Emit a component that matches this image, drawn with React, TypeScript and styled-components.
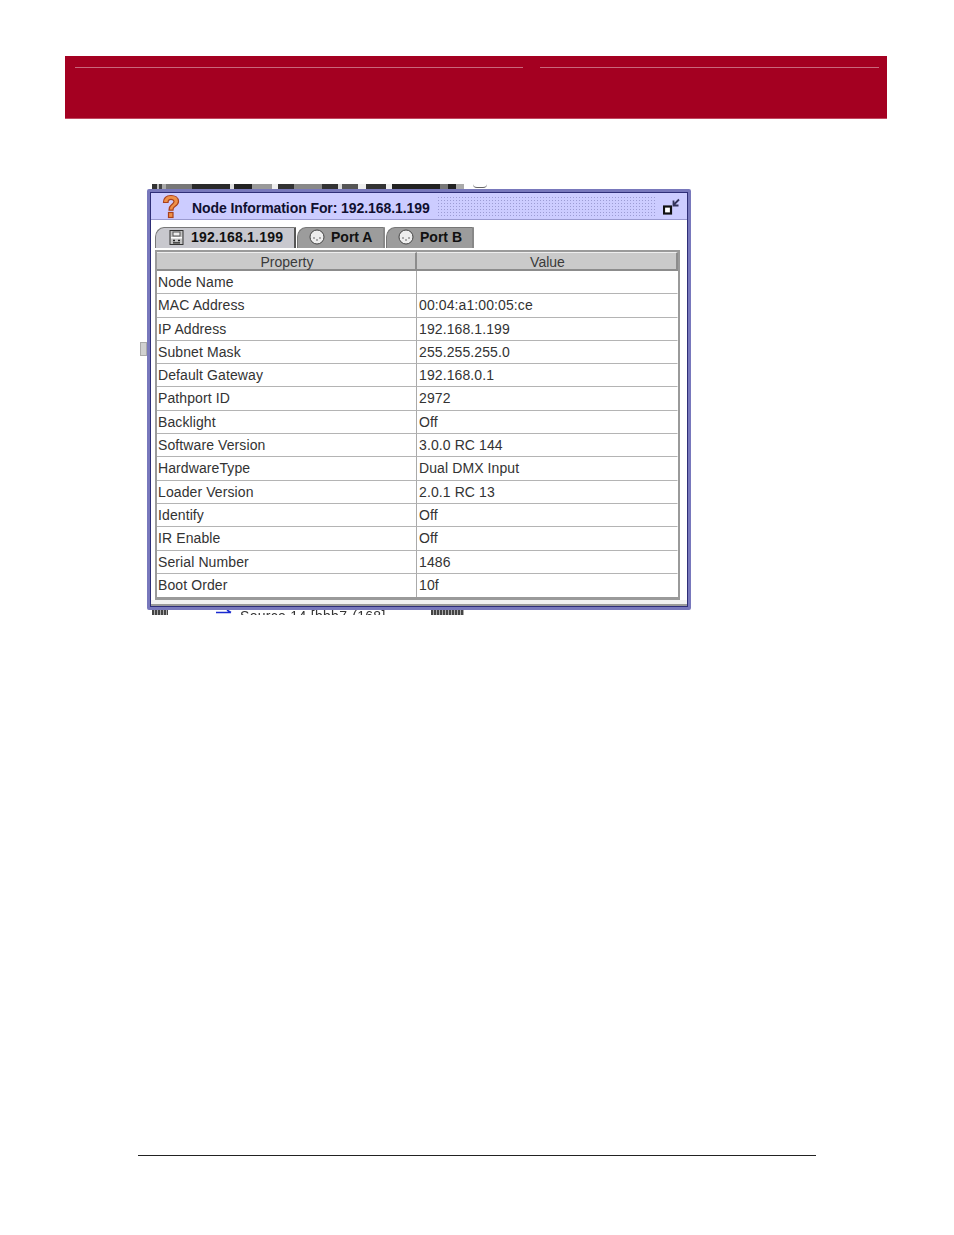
import React from 'react';
import styled, { createGlobalStyle } from 'styled-components';

const GlobalStyle = createGlobalStyle`
  html, body {
    margin: 0;
    padding: 0;
    background: #fff;
  }
`;

const Page = styled.div`
  width: 954px;
  height: 1235px;
  box-sizing: border-box;
  padding-top: 56px;
  display: flex;
  flex-direction: column;
  overflow: hidden;
  font-family: 'Liberation Sans', Arial, sans-serif;
`;

const Banner = styled.header`
  width: 822px;
  height: 63px;
  margin-left: 65px;
  box-sizing: border-box;
  padding: 11px 8px 0 10px;
  background: #a40021;
  border-bottom: 1px solid #c04a62;
  display: flex;
  justify-content: space-between;
  align-items: flex-start;
`;

const BannerLine = styled.div<{ $w: number }>`
  width: ${(p) => p.$w}px;
  height: 1px;
  background: #c9687c;
`;

const Shot = styled.div`
  width: 544px;
  margin: 65px 0 0 147px;
  position: relative;
  filter: blur(0.35px);
`;

const ScrapTop = styled.div`
  height: 5px;
  display: flex;
  padding-left: 5px;
`;

const ScrapStrip = styled.div`
  width: 312px;
  height: 5px;
  background: linear-gradient(
    90deg,
    #333 0 5px, #bbb 5px 7px, #444 7px 10px, #aaa 10px 14px, #777 14px 40px, #2a2a2a 40px 78px,
    #ddd 78px 82px, #222 82px 100px, #999 100px 120px, #eee 120px 126px, #333 126px 142px,
    #888 142px 170px, #333 170px 186px, #ddd 186px 190px, #555 190px 206px, #eee 206px 214px,
    #333 214px 234px, #eee 234px 240px, #222 240px 288px, #777 288px 296px, #222 296px 304px, #aaa 304px 312px
  );
`;

const ScrapMark = styled.div`
  width: 14px;
  height: 3px;
  margin-left: 9px;
  border-bottom: 1px solid #666;
  border-radius: 0 0 7px 7px;
`;

const Window = styled.div`
  height: 421px;
  box-sizing: border-box;
  background: #fff;
  border: 3px solid #7878bc;
  border-radius: 2px;
  box-shadow: inset 0 0 0 1px #2e2e78;
  padding: 1px;
  display: flex;
  flex-direction: column;
`;

const TitleBar = styled.div`
  height: 27px;
  flex: none;
  box-sizing: border-box;
  padding: 0 6px 0 10px;
  background: #ccccff;
  border-bottom: 1px solid #9a9ad0;
  display: flex;
  align-items: center;
  color: #101030;
  font-size: 14px;
  font-weight: bold;
`;

const TitleText = styled.span`
  margin-left: 11px;
  padding-top: 3px;
  letter-spacing: -0.08px;
  white-space: nowrap;
`;

const Dither = styled.div`
  flex: 1;
  height: 20px;
  margin: 0 7px;
  background-color: #ccccff;
  background-image: radial-gradient(#9c9cd4 0.8px, transparent 0.9px);
  background-size: 3px 3px;
`;

const TabRow = styled.div`
  height: 23px;
  flex: none;
  margin-top: 5px;
  padding-left: 4px;
  display: flex;
  align-items: flex-end;
`;

const Tab = styled.div<{ $active?: boolean; $w: number }>`
  width: ${(p) => p.$w}px;
  height: 21px;
  box-sizing: border-box;
  margin-right: 1px;
  padding: 0 0 2px ${(p) => (p.$active ? 13 : 11)}px;
  display: flex;
  align-items: center;
  gap: ${(p) => (p.$active ? 7 : 6)}px;
  background: ${(p) => (p.$active ? '#c8c8ce' : '#9c9c9c')};
  border-top: 1px solid #777;
  border-left: 1px solid #777;
  border-right: 2px solid ${(p) => (p.$active ? '#555' : '#888')};
  border-top-left-radius: 9px 10px;
  color: #111;
  font-size: 14px;
  font-weight: bold;
  letter-spacing: ${(p) => (p.$active ? 0.2 : 0)}px;
`;

const TableFrame = styled.div`
  flex: none;
  margin: 2px 7px 0 4px;
  border: 2px solid #9a9a9a;
  border-bottom-width: 3px;
  background: #fff;
`;

const PropsTable = styled.div`
  display: grid;
  grid-template-columns: 260px 1fr;
`;

const HeadCell = styled.div`
  height: 19px;
  box-sizing: border-box;
  padding-left: 2px;
  background: #cacaca;
  border-right: 2px solid #8c8c8c;
  border-bottom: 2px solid #8c8c8c;
  border-top: 1px solid #eee;
  color: #3a3a3a;
  font-size: 14px;
  line-height: 18px;
  text-align: center;
`;

const Cell = styled.div<{ $first?: boolean; $last?: boolean }>`
  height: 23.3px;
  box-sizing: border-box;
  padding-left: ${(p) => (p.$first ? 1 : 2)}px;
  border-right: 1px solid ${(p) => (p.$first ? '#aaa' : 'transparent')};
  border-bottom: ${(p) => (p.$last ? 0 : '1px solid #b4b4b4')};
  color: #333;
  font-size: 14px;
  line-height: 22px;
  letter-spacing: 0.1px;
  white-space: nowrap;
`;

const WindowFoot = styled.div`
  margin-top: auto;
  height: 4px;
  flex: none;
  background: #f2f2f2;
  border-bottom: 2px solid #9a9a9a;
`;

const ScrapBottom = styled.div`
  height: 5px;
  margin: 0 227px 0 5px;
  overflow: hidden;
  display: flex;
  align-items: flex-start;
  color: #333;
  font-size: 14px;
  line-height: 14px;
`;

const ScrapBar = styled.div<{ $w: number }>`
  width: ${(p) => p.$w}px;
  height: 5px;
  flex: none;
  background: repeating-linear-gradient(90deg, #444 0 2px, #aaa 2px 3px);
`;

const ScrapArrow = styled.svg`
  flex: none;
  margin-left: 48px;
`;

const ScrapLabel = styled.span`
  flex: 1;
  margin-left: 8px;
  margin-top: -1px;
  color: #333;
  letter-spacing: 0.3px;
  white-space: nowrap;
`;

const SideTab = styled.div`
  position: absolute;
  left: -7px;
  top: 158px;
  width: 7px;
  height: 14px;
  background: #d0d0d0;
  border: 1px solid #aaa;
  box-sizing: border-box;
`;

const FooterRule = styled.div`
  width: 678px;
  height: 1px;
  margin: 540px 0 0 138px;
  background: #222;
`;

const rows: [string, string][] = [
  ['Node Name', ''],
  ['MAC Address', '00:04:a1:00:05:ce'],
  ['IP Address', '192.168.1.199'],
  ['Subnet Mask', '255.255.255.0'],
  ['Default Gateway', '192.168.0.1'],
  ['Pathport ID', '2972'],
  ['Backlight', 'Off'],
  ['Software Version', '3.0.0 RC 144'],
  ['HardwareType', 'Dual DMX Input'],
  ['Loader Version', '2.0.1 RC 13'],
  ['Identify', 'Off'],
  ['IR Enable', 'Off'],
  ['Serial Number', '1486'],
  ['Boot Order', '10f'],
];

const QuestionIcon = () => (
  <svg width="20" height="25" viewBox="0 0 20 25">
    <path
      d="M2.500 8.500C2.500 3.500 6 1.500 10 1.500s7.500 2 7.500 6c0 3-2.500 4.200-4.500 5.700-1 .8-1 1.500-1 3H8c0-3 .5-4 2.500-5.500 1.500-1.200 2.500-1.700 2.500-3.200 0-1.400-1.500-2.200-3-2.200S7 6.200 7 8.500z"
      fill="#ee9048"
      stroke="#a8401c"
      strokeWidth="1.200"
    />
    <rect x="7.500" y="18.500" width="4.500" height="5" fill="#ee9048" stroke="#a8401c" strokeWidth="1.200" />
  </svg>
);

const MinimizeIcon = () => (
  <svg width="18" height="19" viewBox="0 0 18 19">
    <rect x="1" y="9.500" width="7" height="7" fill="#fff" stroke="#111" strokeWidth="2.200" />
    <path d="M16 2.500L10 8.500M10.500 3.500v5h5" fill="none" stroke="#33335a" strokeWidth="1.800" />
  </svg>
);

const NodeIcon = () => (
  <svg width="15" height="15" viewBox="0 0 15 15">
    <rect x="1" y="0.500" width="13" height="14" fill="#c4c4c4" stroke="#333" />
    <rect x="4" y="2" width="7" height="4" fill="#eee" stroke="#555" />
    <rect x="2" y="7" width="11" height="1.500" fill="#fff" />
    <path d="M4 10.500h2M9 10.500h2M4 12.800h7" stroke="#222" strokeWidth="1.300" />
  </svg>
);

const PortIcon = () => (
  <svg width="16" height="16" viewBox="0 0 16 16">
    <circle cx="8" cy="8" r="7" fill="#eee" stroke="#444" />
    <circle cx="5" cy="9" r="0.800" fill="#555" />
    <circle cx="8" cy="11" r="0.800" fill="#555" />
    <circle cx="11" cy="9" r="0.800" fill="#555" />
  </svg>
);

const App: React.FC = () => {
  return (
    <Page>
      <GlobalStyle />
      <Banner>
        <BannerLine $w={448} />
        <BannerLine $w={339} />
      </Banner>
      <Shot>
        <SideTab />
        <ScrapTop>
          <ScrapStrip />
          <ScrapMark />
        </ScrapTop>
        <Window>
          <TitleBar>
            <QuestionIcon />
            <TitleText>Node Information For: 192.168.1.199</TitleText>
            <Dither />
            <MinimizeIcon />
          </TitleBar>
          <TabRow>
            <Tab $active $w={141}>
              <NodeIcon />
              192.168.1.199
            </Tab>
            <Tab $w={88}>
              <PortIcon />
              Port A
            </Tab>
            <Tab $w={88}>
              <PortIcon />
              Port B
            </Tab>
          </TabRow>
          <TableFrame>
            <PropsTable>
              <HeadCell>Property</HeadCell>
              <HeadCell>Value</HeadCell>
              {rows.map(([name, value], i) => (
                <React.Fragment key={name}>
                  <Cell $first $last={i === rows.length - 1}>{name}</Cell>
                  <Cell $last={i === rows.length - 1}>{value}</Cell>
                </React.Fragment>
              ))}
            </PropsTable>
          </TableFrame>
          <WindowFoot />
        </Window>
        <ScrapBottom>
          <ScrapBar $w={16} />
          <ScrapArrow width="16" height="5" viewBox="0 0 16 5">
            <path d="M0 2.500h15M11 0l4 2.500" stroke="#1a2ad0" strokeWidth="1.500" fill="none" />
          </ScrapArrow>
          <ScrapLabel>Source 14 [bbb7-(168]</ScrapLabel>
          <ScrapBar $w={33} />
        </ScrapBottom>
      </Shot>
      <FooterRule />
    </Page>
  );
};

export default App;
